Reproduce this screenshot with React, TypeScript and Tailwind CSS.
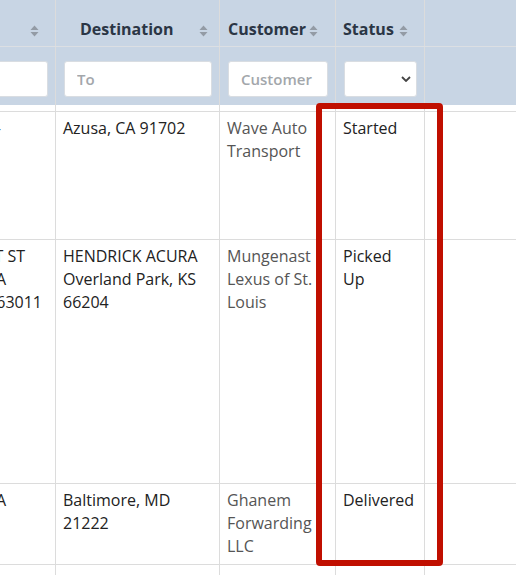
import type { ReactNode } from 'react';

const COLS = 'grid grid-cols-[56px_164px_116px_89px_1fr]';

const ROWS = [
  { h: 'h-[128px]', tail: [{ t: 'WEST COVINA LOT A-', pr: 'pr-[54px]' }], dest: 'Azusa, CA 91702', customer: 'Wave Auto Transport', status: 'Started' },
  {
    h: 'h-[244px]',
    tail: [
      { t: '1500 WEST ST', pr: 'pr-[30px]' },
      { t: 'CHESTERFIELD, MA', pr: 'pr-[49px]' },
      { t: 'Chesterfield, MO 63011', pr: 'pr-[13px]' },
    ],
    dest: 'HENDRICK ACURA Overland Park, KS 66204',
    customer: 'Mungenast Lexus of St. Louis',
    status: 'Picked Up',
  },
  { h: 'h-[81px]', tail: [{ t: 'PHILADELPHIA, PA', pr: 'pr-[49px]' }], dest: 'Baltimore, MD 21222', customer: 'Ghanem Forwarding LLC', status: 'Delivered' },
];

function SortIcon() {
  return (
    <svg width="9" height="12" viewBox="0 0 9 12" className="shrink-0">
      <path d="M4.5 0.5 L8.5 5 L0.5 5 Z" fill="#939ba5" />
      <path d="M0.5 7 L8.5 7 L4.5 11.5 Z" fill="#939ba5" />
    </svg>
  );
}

function Cell({ children, className = '' }: { children?: ReactNode; className?: string }) {
  return <div className={`border-r border-[#dcdcdc] ${className}`}>{children}</div>;
}

export default function App() {
  return (
    <div className="relative w-[516px] h-[575px] overflow-hidden bg-white font-['Open_Sans',sans-serif]">
      {/* header */}
      <div className={`${COLS} h-[47px] bg-[#c8d5e4] border-b border-[#dcdfe3]`}>
        <Cell className="flex items-center justify-end pr-[16px] pt-[15px]">
          <SortIcon />
        </Cell>
        <Cell className="flex items-center justify-between pl-[24px] pr-[11px] pt-[11px]">
          <span className="text-[16px] font-bold text-[#2b3645]">Destination</span>
          <span className="pt-[4px]"><SortIcon /></span>
        </Cell>
        <Cell className="flex items-center gap-[3px] pl-[8px] pt-[11px]">
          <span className="text-[16px] font-bold text-[#2b3645]">Customer</span>
          <span className="pt-[4px]"><SortIcon /></span>
        </Cell>
        <Cell className="flex items-center gap-[5px] pl-[7px] pt-[11px]">
          <span className="text-[16px] font-bold text-[#2b3645]">Status</span>
          <span className="pt-[4px]"><SortIcon /></span>
        </Cell>
        <div />
      </div>

      {/* filters */}
      <div className={`${COLS} h-[58px] bg-[#c8d5e4]`}>
        <Cell className="flex items-center pr-[7px] pt-[5px]">
          <div className="h-[36px] w-full rounded-r-[3px] bg-white border border-[#d9dde2] border-l-0" />
        </Cell>
        <Cell className="flex items-center pl-[8px] pr-[7px] pt-[5px]">
          <input placeholder="To" className="h-[36px] w-full rounded-[3px] bg-white border border-[#d9dde2] px-[12px] text-[15px] font-semibold outline-none placeholder:text-[#a3a7ab]" />
        </Cell>
        <Cell className="flex items-center pl-[8px] pr-[7px] pt-[5px]">
          <input placeholder="Customer" className="h-[36px] w-full rounded-[3px] bg-white border border-[#d9dde2] px-[12px] text-[15px] font-semibold outline-none placeholder:text-[#a3a7ab]" />
        </Cell>
        <Cell className="flex items-center pl-[8px] pr-[7px] pt-[5px]">
          <div className="h-[36px] w-full rounded-[3px] bg-white border border-[#d9dde2] flex items-center justify-end pr-[5px]">
            <svg width="10" height="6" viewBox="0 0 10 6">
              <path d="M1 1 L5 5 L9 1" fill="none" stroke="#444" strokeWidth="1.8" />
            </svg>
          </div>
        </Cell>
        <div />
      </div>

      {/* gap under sticky header */}
      <div className={`${COLS} h-[7px] border-b border-[#dcdcdc]`}>
        <Cell /><Cell /><Cell /><Cell /><div />
      </div>

      {ROWS.map((r, i) => (
        <div key={i} className={`${COLS} ${r.h} border-b border-[#dcdcdc] text-[16px] leading-[23px]`}>
          <Cell className="overflow-hidden pt-[5px] flex flex-col items-end text-[#222]">
            {r.tail.map((l, j) => (
              <div key={j} className={`whitespace-nowrap ${l.pr}`}>{l.t}</div>
            ))}
          </Cell>
          <Cell className="pt-[5px] pl-[7px] pr-[8px] text-[#222]">{r.dest}</Cell>
          <Cell className="pt-[5px] pl-[7px] pr-[6px] text-[#555]">{r.customer}</Cell>
          <Cell className="pt-[5px] pl-[7px] pr-[12px] text-[#222]">{r.status}</Cell>
          <div />
        </div>
      ))}
      <div className={`${COLS} h-[20px]`}>
        <Cell /><Cell /><Cell /><Cell /><div />
      </div>

      {/* highlight box */}
      <div className="absolute left-[316px] top-[103px] w-[127px] h-[463px] border-[6px] border-[#c00f00] rounded-[4px]" />
    </div>
  );
}
